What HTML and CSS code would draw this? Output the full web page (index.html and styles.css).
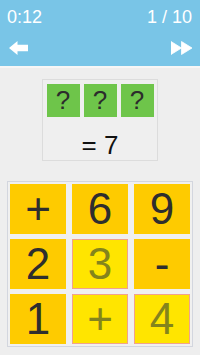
FILE: index.html
```html
<!DOCTYPE html>
<html>
<head>
<meta charset="utf-8">
<link rel="stylesheet" href="styles.css">
</head>
<body>
<div class="header">
  <div class="stats">
    <span class="time">0:12</span>
    <span class="progress">1 / 10</span>
  </div>
  <div class="nav">
    <svg class="back" width="20" height="14" viewBox="0 0 20 14"><path d="M0 7 L8.5 0 L8.5 3.8 L19 3.8 L19 10.2 L8.5 10.2 L8.5 14 Z" fill="#fff"/></svg>
    <svg class="skip" width="21" height="14" viewBox="0 0 21 14"><path d="M0 0.5 L10.5 7 L0 13.5 Z M10.5 0.5 L21 7 L10.5 13.5 Z" fill="#fff" stroke="#fff" stroke-width="0.8" stroke-linejoin="round"/></svg>
  </div>
</div>
<div class="card">
  <div class="slots">
    <div class="slot">?</div>
    <div class="slot">?</div>
    <div class="slot">?</div>
  </div>
  <div class="result">= 7</div>
</div>
<div class="board">
  <div class="cell">+</div>
  <div class="cell">6</div>
  <div class="cell">9</div>
  <div class="cell">2</div>
  <div class="cell sel">3</div>
  <div class="cell">-</div>
  <div class="cell">1</div>
  <div class="cell sel">+</div>
  <div class="cell sel">4</div>
</div>
</body>
</html>
```
FILE: styles.css
```css
html, body {
  margin: 0;
  padding: 0;
}
body {
  background: #eeeeee;
  font-family: "Liberation Sans", Arial, sans-serif;
  width: 200px;
  height: 355px;
  overflow: hidden;
}
.header {
  background: #79c5e7;
  height: 59px;
  padding-top: 7px;
  border-bottom: 2px solid #f6f6f6;
}
.stats {
  display: flex;
  justify-content: space-between;
  padding: 0 8px 0 7px;
  color: #ffffff;
  font-size: 18px;
  line-height: 20px;
}
.nav {
  display: flex;
  justify-content: space-between;
  align-items: center;
  padding: 0 8px 0 9px;
  margin-top: 14px;
}
.nav svg {
  display: block;
}
.card {
  margin: 11px auto 0;
  width: 116px;
  box-sizing: border-box;
  border: 1px solid #dcdcdc;
  background: #efefef;
  padding-top: 4px;
}
.slots {
  display: flex;
  justify-content: center;
  gap: 4px;
}
.slot {
  width: 33px;
  height: 33px;
  background: #6ec54a;
  color: #2c2c2c;
  font-size: 26px;
  line-height: 33px;
  text-align: center;
}
.result {
  margin-top: 13px;
  font-size: 26px;
  line-height: 30px;
  text-align: center;
  color: #111111;
}
.board {
  margin: 20px 7px 0;
  border: 1px solid #d3d6de;
  padding: 2px;
  display: grid;
  grid-template-columns: repeat(3, 56px);
  grid-template-rows: repeat(3, 50px);
  column-gap: 6px;
  row-gap: 5px;
  background: #f0f0f0;
}
.cell {
  background: #fecb00;
  color: #2e2e2e;
  font-size: 44px;
  line-height: 50px;
  text-align: center;
}
.cell.sel {
  background: #ffe500;
  color: #84841c;
  box-sizing: border-box;
  border: 1px solid #f1a28c;
  line-height: 48px;
}
```
